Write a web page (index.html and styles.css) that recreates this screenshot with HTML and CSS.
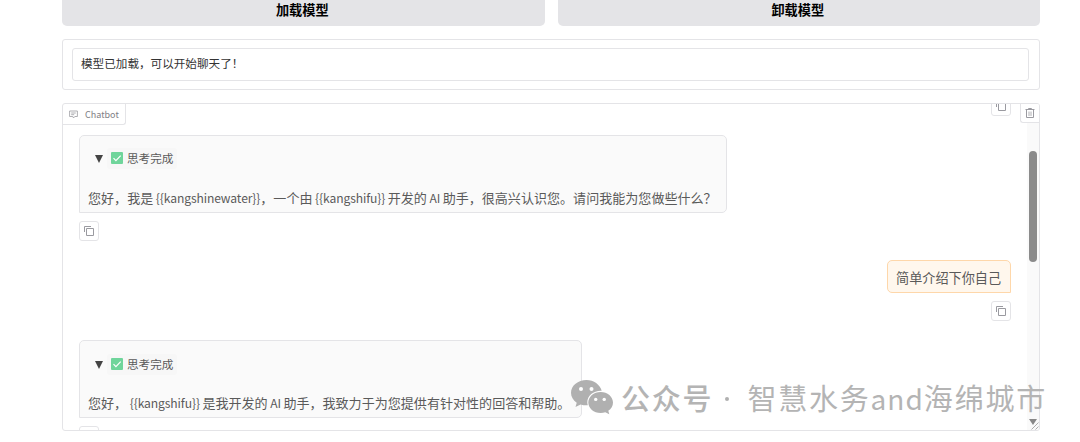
FILE: index.html
```html
<!DOCTYPE html>
<html lang="zh-CN">
<head>
    <meta charset="UTF-8">
    <meta name="viewport" content="width=device-width, initial-scale=1.0">
    <title>Chatbot</title>
    <link rel="stylesheet" href="styles.css">
</head>
<body>
    <!-- Shared icons -->
    <svg class="icon-defs" width="0" height="0">
        <symbol id="icon-copy" viewBox="0 0 12 12">
            <path d="M3.500 3.500h7v7h-7zM1.500 7V1.500H8" fill="none" stroke="#9a9aa0" stroke-width="1"/>
        </symbol>
        <symbol id="icon-check" viewBox="0 0 12 12">
            <rect width="12" height="12" rx="1" fill="#6fd59b"/>
            <path d="M2.5 6.2l2.4 2.4 4.8-5" fill="none" stroke="#fff" stroke-width="1.2"/>
        </symbol>
    </svg>

    <main class="container">
        <div class="button-row">
            <button class="btn">加载模型</button>
            <button class="btn">卸载模型</button>
        </div>

        <div class="status-block">
            <div class="status-text">模型已加载，可以开始聊天了！</div>
        </div>

        <div class="chatbot">
            <div class="chat-label">
                <svg width="9" height="9" viewBox="0 0 9 9" fill="none" stroke="#9a9aa0" stroke-width="0.8">
                    <path d="M.6 1h7.8v5.5H5.8L4.5 8 3.8 6.5H.6zM2.2 3h4.6M2.2 4.7h3"/>
                </svg>
                <span>Chatbot</span>
            </div>
            <button class="clear-btn" aria-label="Clear">
                <svg width="10" height="12" viewBox="0 0 10 12" fill="none" stroke="#9a9aa0">
                    <path d="M.5 2.500h9M3.500 2V1.500h3V2M1.500 2.500v8h7v-8"/>
                    <path d="M4 4.500v4.500M6 4.500v4.500" stroke-width="0.8"/>
                </svg>
            </button>

            <div class="messages">
                <button class="copy-btn user-copy first-copy" aria-label="Copy"><svg><use href="#icon-copy"/></svg></button>

                <div class="bubble bot first">
                    <div class="summary">
                        <span class="arrow"></span>
                        <span class="tag"><svg><use href="#icon-check"/></svg>思考完成</span>
                    </div>
                    <p>您好，我是 <span class="latin">{{kangshinewater}}</span>，一个由 <span class="latin">{{kangshifu}}</span> 开发的 <span class="latin">AI</span> 助手，很高兴认识您。请问我能为您做些什么？</p>
                </div>
                <button class="copy-btn" aria-label="Copy"><svg><use href="#icon-copy"/></svg></button>

                <div class="bubble user">简单介绍下你自己</div>
                <button class="copy-btn user-copy" aria-label="Copy"><svg><use href="#icon-copy"/></svg></button>

                <div class="bubble bot second">
                    <div class="summary">
                        <span class="arrow"></span>
                        <span class="tag"><svg><use href="#icon-check"/></svg>思考完成</span>
                    </div>
                    <p>您好， <span class="latin">{{kangshifu}}</span> 是我开发的 <span class="latin">AI</span> 助手，我致力于为您提供有针对性的回答和帮助。</p>
                </div>
                <button class="copy-btn" aria-label="Copy"><svg><use href="#icon-copy"/></svg></button>
            </div>

            <div class="scrollbar">
                <div class="thumb"></div>
                <div class="scroll-down"></div>
            </div>
            <svg class="resizer" width="8" height="8" viewBox="0 0 8 8" stroke="#999" stroke-width="0.8">
                <path d="M0.5 7.5l7-7M4.5 7.5l3-3"/>
            </svg>
        </div>
    </main>

    <div class="watermark">
        <svg width="43" height="35" viewBox="0 0 43 35">
            <path fill="#b0b0b0" d="M15.500 0C7 0 0 5.600 0 12.800c0 4 2.200 7.500 5.700 9.900L4.500 27l5.100-2.600c1.800.6 3.900.9 6 .9h1.200c-.3-1-.5-2-.5-3 0-6.500 6-11.500 13.500-11.500h.9C29 4.600 22.800 0 15.500 0z"/>
            <path fill="#b0b0b0" d="M29.700 12c-7 0-12.400 4.700-12.400 10.500S22.700 33 29.700 33c1.600 0 3.200-.3 4.600-.8l4 2.100-1-3.500c2.900-1.900 4.700-4.900 4.700-8.300C42 16.700 36.500 12 29.700 12z"/>
            <g fill="#fff">
                <circle cx="10" cy="9" r="2"/><circle cx="20.500" cy="9" r="2"/>
                <circle cx="24.700" cy="19.400" r="1.700"/><circle cx="33.200" cy="19.400" r="1.700"/>
            </g>
        </svg>
        <span class="wm-label">公众号</span>
        <span class="wm-dot"></span>
        <span class="wm-name">智慧水务<span class="wm-latin">and</span>海绵城市</span>
    </div>
</body>
</html>
```

FILE: styles.css
```css
* {
    box-sizing: border-box;
}

body {
    margin: 0;
    height: 442px;
    overflow: hidden;
    background-color: #fff;
    font-family: "Noto Sans CJK SC", sans-serif;
    color: #5a5a5a;
}

button {
    font-family: inherit;
    padding: 0;
}

.icon-defs {
    position: absolute;
}

.container {
    width: 978px;
    margin-left: 62px;
    display: flex;
    flex-direction: column;
    gap: 13px;
}

.button-row {
    display: flex;
    gap: 13px;
    height: 26px;
}

.btn {
    flex: 1;
    border: none;
    border-radius: 0 0 5px 5px;
    background-color: #e4e4e7;
    color: #000;
    font-size: 13.2px;
    font-weight: 700;
    line-height: 20px;
    padding: 0 2px 7px 0;
}

.status-block {
    height: 51px;
    padding: 8px 10px 8px 9px;
    border: 1px solid #e4e4e7;
    border-radius: 3px;
}

.status-text {
    height: 33px;
    padding-left: 8px;
    border: 1px solid #e4e4e7;
    border-radius: 3px;
    color: #333;
    font-size: 11.6px;
    line-height: 29px;
}

/* Chat panel */
.chatbot {
    position: relative;
    display: flex;
    height: 328px;
    border: 1px solid #e4e4e7;
    border-radius: 3px;
    overflow: hidden;
}

.chat-label {
    position: absolute;
    top: 0;
    left: 0;
    display: flex;
    align-items: center;
    gap: 7px;
    width: 63px;
    height: 21px;
    padding-left: 6px;
    border: solid #e4e4e7;
    border-width: 0 1px 1px 0;
    border-radius: 0 0 3px 0;
    font-size: 9px;
    color: #808086;
}

.clear-btn {
    position: absolute;
    z-index: 1;
    top: 0;
    right: 0;
    display: flex;
    align-items: center;
    justify-content: center;
    width: 19px;
    height: 19px;
    border: solid #e4e4e7;
    border-width: 0 0 1px 1px;
    border-radius: 0 0 0 3px;
    background-color: #fff;
}

.messages {
    flex: 1;
    display: flex;
    flex-direction: column;
    align-items: flex-start;
    padding: 0 16px;
    overflow: hidden;
}

.copy-btn {
    display: flex;
    flex-shrink: 0;
    align-items: center;
    justify-content: center;
    width: 20px;
    height: 20px;
    margin-top: 8px;
    border: 1px solid #e4e4e7;
    border-radius: 3px;
    background-color: #fff;
}

.copy-btn svg {
    width: 12px;
    height: 12px;
}

.user-copy {
    align-self: flex-end;
}

.first-copy {
    margin-top: -8px;
}

.bubble {
    flex-shrink: 0;
    border: 1px solid #e4e4e7;
    border-radius: 5px;
    font-size: 13.15px;
    white-space: nowrap;
}

.bot {
    height: 78px;
    margin-top: 19px;
    padding: 12px 8px 0;
    border-bottom-left-radius: 0;
    background-color: #fafafa;
}

.first {
    width: 648px;
}

.second {
    width: 503px;
}

.bot p {
    margin: 19px 0 0;
    font-size: 13.05px;
    line-height: 20px;
    word-spacing: -0.4px;
}

.latin {
    font-size: 12.1px;
    letter-spacing: -0.1px;
}

.summary {
    display: flex;
    align-items: center;
    height: 21px;
    padding-left: 7px;
    font-size: 11.6px;
}

.arrow {
    border: solid transparent;
    border-width: 8px 4.500px 0;
    border-top-color: #444;
}

.tag {
    display: flex;
    align-items: center;
    gap: 4px;
    height: 21px;
    margin: -1px 0 0 4px;
    padding: 0 4px;
    border-radius: 3px;
    background-color: #f7f7f7;
}

.tag svg {
    width: 12px;
    height: 12px;
}

.user {
    align-self: flex-end;
    width: 124px;
    height: 33px;
    margin-top: 19px;
    padding-left: 8px;
    border-color: #fed7aa;
    border-bottom-right-radius: 0;
    background-color: #fff7ed;
    line-height: 34px;
}

.second .summary {
    margin-top: 1px;
}

.second p {
    margin-top: 18px;
}

.scrollbar {
    display: flex;
    flex-direction: column;
    align-items: center;
    justify-content: space-between;
    width: 12px;
    padding: 47px 0 5px;
    background-color: #fafafa;
}

.thumb {
    width: 8px;
    height: 111px;
    border-radius: 4px;
    background-color: #8b8b8b;
}

.scroll-down {
    border: solid transparent;
    border-width: 6px 4px 0;
    border-top-color: #888;
}

.resizer {
    position: absolute;
    right: 0;
    bottom: 0;
}

/* Account mark laid over the page */
.watermark {
    position: absolute;
    top: 380px;
    left: 571px;
    display: flex;
    align-items: flex-start;
    color: #b4b4b4;
    font-size: 29px;
    line-height: 35px;
    letter-spacing: 1.800px;
    white-space: nowrap;
}

.wm-label {
    margin-left: 7px;
    font-weight: 500;
}

.wm-dot {
    width: 4px;
    height: 4px;
    margin: 17px 18px 0 12px;
    border-radius: 50%;
    background-color: #b0b0b0;
}

.wm-latin {
    font-size: 28px;
    letter-spacing: 1px;
}
```
